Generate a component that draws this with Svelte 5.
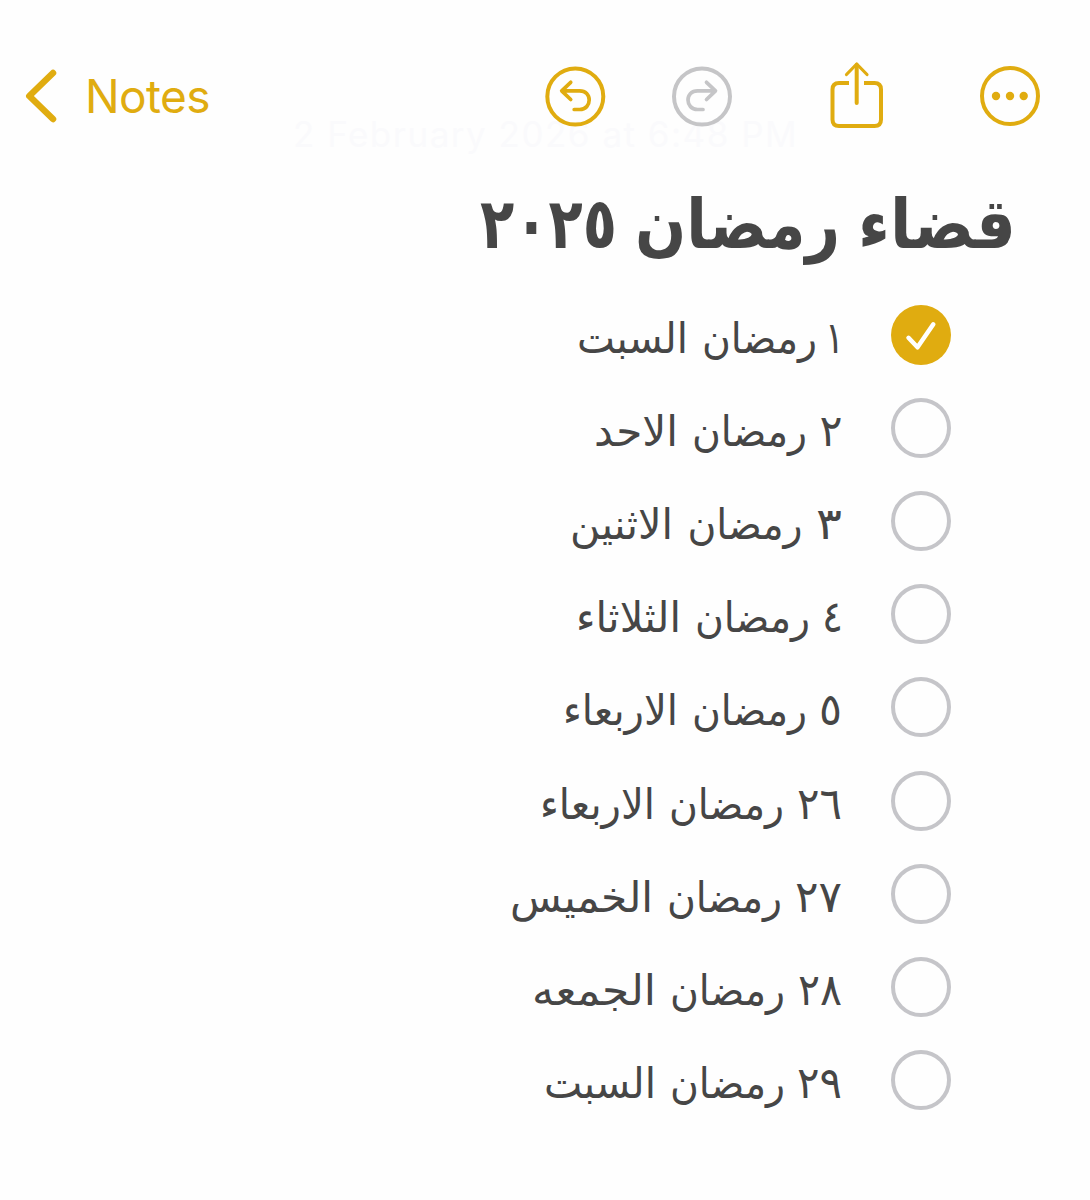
<script>
  // Each word is [text, right edge, width], measured along the label's 600px canvas.
  const items = [
    { words: [['١', 594, 19], ['رمضان', 567, 115], ['السبت', 438, 111]], done: true },
    { words: [['٢', 592.5, 23], ['رمضان', 557, 115], ['الاحد', 428, 84]] },
    { words: [['٣', 592, 26], ['رمضان', 552.5, 115], ['الاثنين', 423, 103]] },
    { words: [['٤', 593, 21], ['رمضان', 560, 115], ['الثلاثاء', 431, 105]] },
    { words: [['٥', 592, 23], ['رمضان', 557, 115], ['الاربعاء', 428, 115]] },
    { words: [['٢٦', 592, 45], ['رمضان', 534, 115], ['الاربعاء', 405, 115]] },
    { words: [['٢٧', 592, 47], ['رمضان', 532, 115], ['الخميس', 403, 143]] },
    { words: [['٢٨', 592, 44], ['رمضان', 535, 115], ['الجمعه', 406, 124]] },
    { words: [['٢٩', 592, 45], ['رمضان', 535, 115], ['السبت', 406, 112]] }
  ];
  const title = [['قضاء', 546, 158], ['رمضان', 370, 205], ['٢٠٢٥', 147, 137]];
</script>

<main>
  <header>
    <div class="back">
      <svg width="32" height="54" viewBox="0 0 32 54"><path d="M28 4 4.3 27 28 50" stroke-width="6.5" /></svg>
      <span>Notes</span>
    </div>
    <div class="actions">
      <svg width="60" height="60" viewBox="0 0 60 60">
        <circle cx="30.3" cy="30.5" r="28" stroke-width="4" />
        <path d="M25.7 16.3 16.7 24.8 25.7 33.5M17.7 24.8H34.7C40.7 24.8 44.2 29 44.2 34S40.7 43.5 34.7 43.5H29.2" stroke-width="3.7" />
      </svg>
      <svg class="disabled" width="60" height="60" viewBox="0 0 60 60">
        <circle cx="30" cy="30.5" r="28" stroke-width="4" />
        <path d="M34.5 16.3 43.5 24.8 34.5 33.5M42.5 24.8H25.5C19.5 24.8 16 29 16 34S19.5 43.5 25.5 43.5H31" stroke-width="3.7" />
      </svg>
      <svg class="share" width="54" height="68" viewBox="0 0 54 68">
        <path d="M19 21H9Q2.5 21 2.5 27.5V57.5Q2.5 64 9 64H44.5Q51 64 51 57.5V27.5Q51 21 44.5 21H34" stroke-width="4" stroke-linecap="butt" />
        <path d="M26.7 3V41" stroke-width="4" />
        <path d="M16.5 12.5 26.7 2 37 12.5" stroke-width="3.2" />
      </svg>
      <svg class="more" width="60" height="60" viewBox="0 0 60 60">
        <circle cx="30" cy="30" r="28" stroke-width="4" />
        <g class="dots"><circle cx="16" cy="30" r="4.2" /><circle cx="30" cy="30" r="4.2" /><circle cx="43.7" cy="30" r="4.2" /></g>
      </svg>
    </div>
    <time>2 February 2026 at 6:48 PM</time>
  </header>

  <h1>
    <svg width="560" height="110">
      {#each title as [word, x, width], i}
        <text class="title" class:year={i === 2} {x} y="68" textLength={width} lengthAdjust="spacingAndGlyphs">{word}</text>
      {/each}
    </svg>
  </h1>

  <ul>
    {#each items as item}
      <li>
        <svg class="label" width="600" height="80">
          {#each item.words as [word, x, width], i}
            <text class:day={i === 0} {x} y="58" textLength={width} lengthAdjust="spacingAndGlyphs">{word}</text>
          {/each}
        </svg>
        <span class="box" class:done={item.done}>
          {#if item.done}
            <svg width="60" height="60" viewBox="0 0 60 60"><path d="M17.5 32.8 26.5 42.3 42.3 19.3" stroke-width="4.5" /></svg>
          {/if}
        </span>
      </li>
    {/each}
  </ul>
</main>

<style>
  :global(body) { margin: 0; background: #fefefe; }
  main {
    position: relative;
    z-index: 0;
    width: 1090px;
    height: 1200px;
    overflow: hidden;
    background: #fefefe;
    color: #464646;
    font-family: 'DejaVu Sans', sans-serif;
  }
  svg { display: block; flex: none; fill: none; stroke: #e0ac10; stroke-linecap: round; stroke-linejoin: round; overflow: visible; }
  header {
    position: relative;
    display: flex;
    justify-content: space-between;
    height: 180px;
    box-sizing: border-box;
    padding: 61.5px 50px 0 25px;
    color: #e0ac10;
    font-family: Inter, sans-serif;
  }
  .back { display: flex; align-items: center; gap: 28px; height: 69px; font-size: 46px; }
  .back span { letter-spacing: -0.6px; }
  .actions { display: flex; align-items: center; height: 69px; }
  .disabled { margin-left: 67px; stroke: #c5c5c7; }
  .share { margin-left: 98px; }
  .more { margin-left: 96px; }
  .dots { fill: #e0ac10; stroke: none; }
  time {
    position: absolute;
    z-index: -1;
    left: 293px;
    top: 113px;
    color: #fafafc;
    font-size: 35px;
    letter-spacing: 1.5px;
    white-space: nowrap;
  }
  h1 { margin: 0; height: 116px; padding-left: 470px; }
  text { fill: #464646; stroke: none; direction: rtl; font-size: 42px; }
  .day { font-size: 44px; }
  .title { font-size: 69px; font-weight: 700; }
  .year { font-size: 70px; }
  ul { list-style: none; margin: -7.5px 0 0; padding: 0 139.5px 0 0; }
  li { display: flex; justify-content: flex-end; align-items: center; gap: 41px; height: 93.1px; }
  .box { box-sizing: border-box; width: 60px; height: 60px; border: 4px solid #c5c5c9; border-radius: 50%; }
  .done { border: 0; background: #e0ac10; }
  .done svg { stroke: #fff; }
</style>
